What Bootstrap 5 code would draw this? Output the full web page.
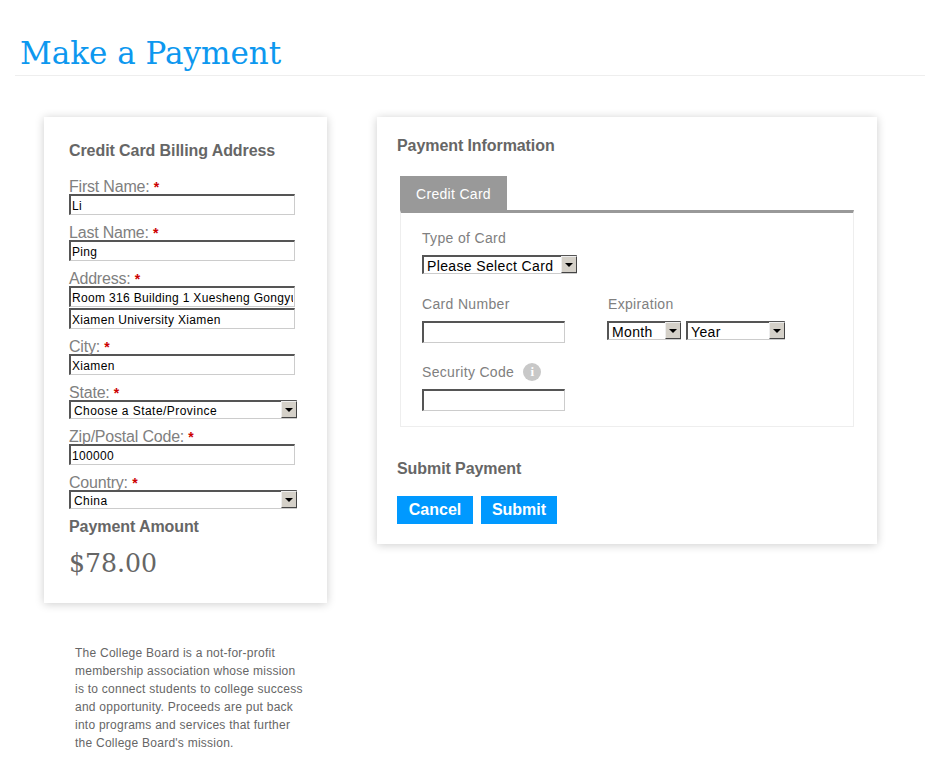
<!DOCTYPE html>
<html lang="en">
<head>
<meta charset="utf-8">
<title>Make a Payment</title>
<link href="https://cdn.jsdelivr.net/npm/bootstrap@5.3.0/dist/css/bootstrap.min.css" rel="stylesheet">
<style>
body{font-family:"Liberation Sans",Arial,sans-serif;color:#666;background:#fff;overflow:hidden}
.pay-head{margin:0 11px 0 15px;padding:34px 0 0 5px;height:76px;border-bottom:1px solid #eee}
.pay-title{font-family:"DejaVu Serif",serif;font-size:31px;line-height:38px;font-weight:400;color:#0d98ef;margin:0}
.pay-main{padding:41px 0 0 44px;gap:50px;align-items:flex-start}
.side{width:283px}
.panel{background:#fff;box-shadow:0 1px 9px rgba(0,0,0,.2)}
.panel-l{padding:25px 25px 0;height:486px}
.panel-r{width:500px;height:427px;padding:20px 20px 0}
.sect{font-size:16px;font-weight:700;color:#666;line-height:18px;margin:0;letter-spacing:-.08px}
.fld{font-size:16px;line-height:17px;font-weight:400;color:#808080;display:block;margin:0;height:16px;letter-spacing:-.2px}
.req{color:#c00;font-size:14px;font-weight:700}
.box{display:block;width:226px;height:21px;background:#fff;border-style:solid;border-width:2px 1px 1px 2px;border-color:#555 #ccc #ccc #555;border-radius:0;padding:2px 1px 0;font:12px/16px "Liberation Sans",Arial,sans-serif;color:#000;outline:0;letter-spacing:.33px}
.sel{position:relative;display:block;height:19px;background:#fff;border-style:solid;border-width:2px 1px 1px 2px;border-color:#555 #ccc #ccc #555}
.sel select{appearance:none;display:block;width:100%;height:16px;border:0;background:transparent;padding:2px 0 0 3px;font:12px/14px "Liberation Sans",Arial,sans-serif;color:#000;letter-spacing:.45px;outline:0}
.sel select.sel-lg{font-size:14px;letter-spacing:.36px}
.drop{position:absolute;top:-1px;right:-1px;width:16px;height:17px;background:#d4d0c8;border:1px solid;border-color:#eee #444 #444 #eee;pointer-events:none}
.drop:after{content:"";position:absolute;left:3px;top:6px;border:4px solid transparent;border-top:4px solid #000;border-bottom:0}
.sel-state{width:228px}
.amount{font-family:"DejaVu Serif",serif;font-size:25.2px;line-height:30px;color:#666}
.note{font-size:12px;line-height:18px;color:#666;margin:41px 0 0 31px;white-space:nowrap;letter-spacing:.25px}
.tab-label{display:block;width:107px;height:35px;background:#999;color:#fff;font-size:14px;line-height:36px;text-align:center;letter-spacing:.3px}
.tab-box{width:454px;height:217px;border:1px solid #eee;border-top:3px solid #999;padding:16px 21px 0;margin-top:-1px}
.tab-wrap{margin:21px 0 0 3px;width:454px}
.fld2{font-size:14px;line-height:18px;color:#808080;margin:0;display:block;letter-spacing:.33px}
.box-sm{width:143px;height:22px}
.info{width:18px;height:18px;border-radius:50%;background:#c8c8c8;color:#fff;font:700 13px/18px "Liberation Serif",serif;text-align:center;margin-left:9px;display:inline-block}
.btn-pay{background:#09f;color:#fff;font-size:16px;font-weight:700;width:76px;height:28px;padding:0;line-height:28px;border:0;border-radius:0}
.btn-pay:hover{background:#09f;color:#fff}
.g1{height:9px}
.first-f{margin-top:18px}
.gap-1px{height:1px}
.pay-h2{margin-top:9px}
.amount-t{margin-top:13px}
.w-type{margin-top:8px;width:155px}
.row-card{margin-top:21px}
.w-num{width:186px}
.mt-num{margin-top:8px}
.exp-row{margin:8px 0 0 -1px;gap:5px}
.w-month{width:74px}
.w-year{width:99px}
.row-sec{margin-top:20px}
.mt-sec{margin-top:8px}
.submit-h{margin-top:33px}
.btn-row{gap:8px;margin-top:18px}
</style>
</head>
<body>
<div class="pay-head"><h1 class="pay-title">Make a Payment</h1></div>
<div class="d-flex pay-main">
  <div class="side">
    <div class="panel panel-l">
      <h2 class="sect">Credit Card Billing Address</h2>
      <label class="fld first-f">First Name: <span class="req">*</span></label>
      <input class="box" value="Li">
      <div class="g1"></div>
      <label class="fld">Last Name: <span class="req">*</span></label>
      <input class="box" value="Ping">
      <div class="g1"></div>
      <label class="fld">Address: <span class="req">*</span></label>
      <input class="box" value="Room 316 Building 1 Xuesheng Gongyu">
      <div class="gap-1px"></div>
      <input class="box" value="Xiamen University Xiamen">
      <div class="g1"></div>
      <label class="fld">City: <span class="req">*</span></label>
      <input class="box" value="Xiamen">
      <div class="g1"></div>
      <label class="fld">State: <span class="req">*</span></label>
      <div class="sel sel-state"><select><option>Choose a State/Province</option></select><span class="drop"></span></div>
      <div class="g1"></div>
      <label class="fld">Zip/Postal Code: <span class="req">*</span></label>
      <input class="box" value="100000">
      <div class="g1"></div>
      <label class="fld">Country: <span class="req">*</span></label>
      <div class="sel sel-state"><select><option>China</option></select><span class="drop"></span></div>
      <h2 class="sect pay-h2">Payment Amount</h2>
      <div class="amount amount-t">$78.00</div>
    </div>
    <p class="note">The College Board is a not-for-profit<br>membership association whose mission<br>is to connect students to college success<br>and opportunity. Proceeds are put back<br>into programs and services that further<br>the College Board's mission.</p>
  </div>
  <div class="panel panel-r">
    <h2 class="sect">Payment Information</h2>
    <div class="tab-wrap">
      <div class="tab-label">Credit Card</div>
      <div class="tab-box">
        <span class="fld2">Type of Card</span>
        <div class="sel w-type"><select class="sel-lg"><option>Please Select Card</option></select><span class="drop"></span></div>
        <div class="d-flex row-card">
          <div class="w-num">
            <span class="fld2">Card Number</span>
            <input class="box box-sm mt-num">
          </div>
          <div>
            <span class="fld2">Expiration</span>
            <div class="d-flex exp-row">
              <div class="sel w-month"><select class="sel-lg"><option>Month</option></select><span class="drop"></span></div>
              <div class="sel w-year"><select class="sel-lg"><option>Year</option></select><span class="drop"></span></div>
            </div>
          </div>
        </div>
        <div class="d-flex align-items-center row-sec"><span class="fld2">Security Code</span><span class="info">i</span></div>
        <input class="box box-sm mt-sec">
      </div>
    </div>
    <h2 class="sect submit-h">Submit Payment</h2>
    <div class="d-flex btn-row">
      <button type="button" class="btn btn-pay">Cancel</button>
      <button type="button" class="btn btn-pay">Submit</button>
    </div>
  </div>
</div>
<script src="https://cdn.jsdelivr.net/npm/bootstrap@5.3.0/dist/js/bootstrap.bundle.min.js"></script>
</body>
</html>
